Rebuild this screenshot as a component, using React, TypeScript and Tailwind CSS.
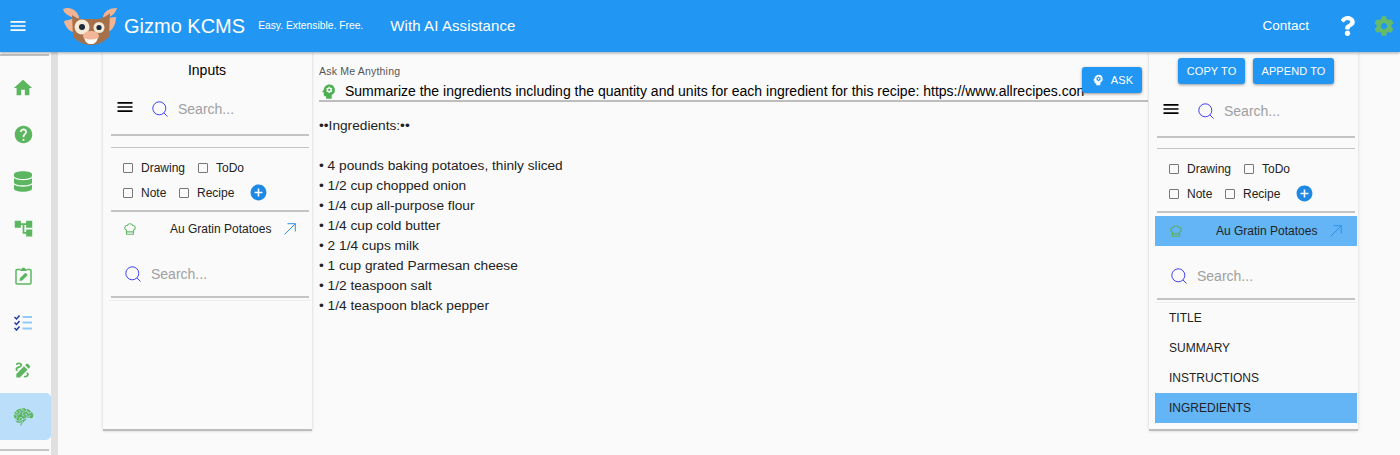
import { FaDatabase, FaQuestion, FaCog } from "react-icons/fa";
import {
  MdAccountTree,
  MdAddCircle,
  MdDraw,
  MdHelp,
  MdHome,
  MdMenu,
  MdPsychology,
} from "react-icons/md";
import { LuChefHat } from "react-icons/lu";
import { GiBrain } from "react-icons/gi";

const ingredients = [
  "4 pounds baking potatoes, thinly sliced",
  "1/2 cup chopped onion",
  "1/4 cup all-purpose flour",
  "1/4 cup cold butter",
  "2 1/4 cups milk",
  "1 cup grated Parmesan cheese",
  "1/2 teaspoon salt",
  "1/4 teaspoon black pepper",
];

const Logo = () => (
  <svg width="60" height="48" viewBox="60 0 60 48" className="shrink-0">
    <path d="M76 16 C70 15 64 12 63 7 C70 4 77 8 79 15 L78 31 C71 31 65 26 64 19 Z" fill="#f2b594" />
    <path d="M106 16 C112 15 116 10 117 6 C110 6 104 9 103 15 L104 31 C111 31 116 24 116 15 Z" fill="#f2b594" />
    <path d="M72 13 C75 15 78 17 82 17 L98 17 C103 16 107 14 110 11 L109 35 C104 40 97 43 91 43 C85 43 78 40 73 35 Z" fill="#a5714a" />
    <circle cx="82" cy="25" r="7.5" fill="#f5ead8" />
    <circle cx="82" cy="25" r="3" fill="#1d2a3a" />
    <circle cx="99" cy="25.500" r="5.500" fill="#f5ead8" />
    <circle cx="99" cy="25.500" r="2.600" fill="#1d2a3a" />
    <ellipse cx="91" cy="34" rx="8" ry="5" fill="#f4b699" />
    <path d="M84.500 36 C87 38 95 38 97.500 36 C97 40 94.500 42 91 42 C87.500 42 85 40 84.500 36 Z" fill="#ffffff" />
  </svg>
);

const Checklist = () => (
  <svg width="18" height="16" viewBox="0 0 18 16" fill="none">
    <path d="M0.500 2 L2.500 4 L5.500 0.500 M0.500 7.500 L2.500 9.500 L5.500 6 M0.500 13 L2.500 15 L5.500 11.500" stroke="#1e3aa8" strokeWidth="1.500" />
    <path d="M8.500 2 H18 M8.500 7.500 H18 M8.500 13.500 H18" stroke="#90caf9" strokeWidth="1.800" />
  </svg>
);

const ClipboardEdit = () => (
  <svg width="17" height="18" viewBox="0 0 17 18" fill="none">
    <path d="M5.500 2.500 H2 C1.400 2.500 1 2.900 1 3.500 V16 C1 16.600 1.400 17 2 17 H15 C15.600 17 16 16.600 16 16 V3.500 C16 2.900 15.600 2.500 15 2.500 H11.500" stroke="currentColor" strokeWidth="1.500" />
    <path d="M5 4 L6.500 1.800 C7 0.300 10 0.300 10.500 1.800 L12 4 Z" fill="currentColor" />
    <path d="M4.500 14 L5 11 L10.500 5.800 L12.800 8 L7.300 13.500 Z" fill="currentColor" />
  </svg>
);

const SearchGlass = () => (
  <svg width="16" height="16" viewBox="0 0 16 16" fill="none" className="shrink-0">
    <circle cx="7.300" cy="7.300" r="6.500" stroke="#3f3ff5" strokeWidth="1" />
    <path d="M12 12 L15.500 15.500" stroke="#3f3ff5" strokeWidth="1" />
  </svg>
);

const ArrowOut = () => (
  <svg width="12" height="12" viewBox="0 0 12 12" fill="none" className="ml-[13px] shrink-0">
    <path d="M0.500 11.500 L11.300 0.700 M3.500 0.700 H11.300 V8.500" stroke="#2e8fe8" strokeWidth="1" />
  </svg>
);

const Search = ({ className }: { className: string }) => (
  <div className={`flex items-center ${className}`}>
    <SearchGlass />
    <span className="ml-[10px] text-[14px] text-[#a0a0a0]">Search...</span>
  </div>
);

const Rule = ({ className = "" }: { className?: string }) => (
  <div className={`ml-[2px] mr-[2px] shrink-0 bg-[#c4c4c4] ${className}`} />
);

const Tick = ({ label, className = "" }: { label: string; className?: string }) => (
  <div className={`flex items-center ${className}`}>
    <span className="w-[10px] h-[10px] border border-[#777] rounded-[1px] mr-[8px]" />
    <span className="text-[12px] text-[#222]">{label}</span>
  </div>
);

const Types = () => (
  <div className="pl-[14px] pt-[7px] h-[62px] shrink-0">
    <div className="flex h-[25px] items-center">
      <Tick label="Drawing" className="w-[75px]" />
      <Tick label="ToDo" />
    </div>
    <div className="flex h-[25px] items-center">
      <Tick label="Note" className="w-[56px]" />
      <Tick label="Recipe" className="w-[70px]" />
      <MdAddCircle className="w-[19px] h-[19px] text-[#1e88e5]" />
    </div>
  </div>
);

const Item = ({ active }: { active?: boolean }) => (
  <div className={`flex items-center h-[30px] pl-[14px] ${active ? "bg-[#64b5f6]" : ""}`}>
    <LuChefHat className={`w-[14px] h-[14px] ${active ? "text-[#5cae60]" : "text-[#66bb6a]"}`} />
    <span className="ml-[33px] text-[12px] text-[#222]">Au Gratin Potatoes</span>
    <ArrowOut />
  </div>
);

const Panel = ({ children }: { children: React.ReactNode }) => (
  <div className="w-[209px] h-[379px] shrink-0 flex flex-col pl-[6px] pr-[1px] bg-[#fafafa] border-b-2 border-[#bdbdbd] shadow-[0_0_3px_rgba(0,0,0,0.18)]">
    {children}
  </div>
);

const Button = ({ children, className = "" }: { children: React.ReactNode; className?: string }) => (
  <div className={`flex items-center justify-center shrink-0 h-[26px] rounded-[3px] bg-[#2196f3] text-white text-[11px] tracking-[0.1px] shadow-[0_1px_3px_rgba(0,0,0,0.4)] ${className}`}>
    {children}
  </div>
);

const navCell = "h-[47px] pr-[5px] flex items-center justify-center";

export default function App() {
  return (
    <div className="w-[1400px] h-[455px] overflow-hidden flex flex-col bg-[#fafafa] font-['Liberation_Sans',sans-serif] text-black">
      <header className="relative z-10 h-[52px] shrink-0 flex items-center bg-[#2196f3] text-white shadow-[0_1px_3px_rgba(0,0,0,0.35)]">
        <MdMenu className="ml-[8px] w-[20px] h-[20px]" />
        <div className="ml-[32px]">
          <Logo />
        </div>
        <span className="ml-[4px] text-[20px]">Gizmo KCMS</span>
        <span className="ml-[13px] text-[10.300px]">Easy. Extensible. Free.</span>
        <span className="ml-[27px] text-[15px] tracking-[0.1px]">With AI Assistance</span>
        <span className="ml-auto text-[13.500px]">Contact</span>
        <FaQuestion className="ml-[31px] w-[15px] h-[22px]" />
        <FaCog className="ml-[19px] mr-[6px] w-[20px] h-[20px] text-[#66bb6a]" />
      </header>

      <div className="flex flex-1 min-h-0">
        <nav className="w-[58px] shrink-0 border-r-[7px] border-[#e0e0e0] flex flex-col text-[#5cb660]">
          <div className="h-[2px] mt-[2px] mb-[8px] bg-[#c4c4c4] mr-[2px]" />
          <div className="flex flex-col">
            <div className={navCell}><MdHome className="w-[22px] h-[22px]" /></div>
            <div className={navCell}><MdHelp className="w-[21px] h-[21px]" /></div>
            <div className={navCell}><FaDatabase className="w-[18px] h-[21px]" /></div>
            <div className={navCell}><MdAccountTree className="w-[21px] h-[21px]" /></div>
            <div className={navCell}><ClipboardEdit /></div>
            <div className={navCell}><Checklist /></div>
            <div className={navCell}><MdDraw className="w-[20px] h-[20px]" /></div>
            <div className={`${navCell} bg-[#bbdefb] rounded-r-[5px]`}><GiBrain className="w-[21px] h-[21px]" /></div>
          </div>
          <div className="h-[2px] mt-[9px] bg-[#c4c4c4] mr-[2px]" />
        </nav>

        <main className="flex-1 min-w-0 flex items-start pl-[45px]">
          <Panel>
            <div className="h-[36px] flex items-center justify-center text-[14px] -ml-[6px]">Inputs</div>
            <div className="flex items-center h-[42px] mb-[4px] pl-[6px]">
              <MdMenu className="w-[20px] h-[20px] -mt-[4px]" />
              <Search className="ml-[17px]" />
            </div>
            <Rule className="h-[2px]" />
            <div className="h-[11px] shrink-0" />
            <Rule className="h-[1px]" />
            <Types />
            <Rule className="h-[2px]" />
            <div className="mt-[2px]"><Item /></div>
            <Search className="h-[40px] pl-[16px] mt-[10px] shrink-0" />
            <div className="h-[2px] shrink-0" />
            <Rule className="h-[2px]" />
            <div className="mt-[2px] h-[1px] bg-[#eeeeee]" />
          </Panel>

          <section className="w-[837px] shrink-0 pl-[7px] pr-[1px]">
            <div className="flex">
              <div className="flex-1 min-w-0 h-[50px] pt-[13px] border-b-2 border-[#bdbdbd] -mr-[66px]">
                <div className="text-[10.500px] tracking-[0.2px] text-[#555] leading-[13px]">Ask Me Anything</div>
                <div className="flex items-center h-[24px] mt-[1px]">
                  <MdPsychology className="w-[19px] h-[19px] text-[#4caf50] shrink-0" />
                  <span className="ml-[7px] text-[14px] whitespace-nowrap">
                    Summarize the ingredients including the quantity and units for each ingredient for this recipe: https://www.allrecipes.con
                  </span>
                </div>
              </div>
              <Button className="relative mt-[15px] mr-[6px] w-[60px] gap-[6px]">
                <MdPsychology className="w-[14px] h-[14px]" />
                ASK
              </Button>
            </div>
            <div className="mt-[14px] text-[13.700px] leading-[20px] text-[#222]">
              <div>••Ingredients:••</div>
              <div className="h-[20px]" />
              {ingredients.map((x) => (
                <div key={x}>• {x}</div>
              ))}
            </div>
          </section>

          <Panel>
            <div className="flex gap-[8px] pt-[6px] h-[37px] pl-[23px] shrink-0">
              <Button className="w-[67px]">COPY TO</Button>
              <Button className="w-[81px]">APPEND TO</Button>
            </div>
            <div className="flex items-center h-[44px] mb-[3px] pl-[6px]">
              <MdMenu className="w-[20px] h-[20px] -mt-[4px]" />
              <Search className="ml-[17px]" />
            </div>
            <Rule className="h-[2px]" />
            <div className="h-[10px] shrink-0" />
            <Rule className="h-[1px]" />
            <Types />
            <Rule className="h-[2px]" />
            <div className="mt-[3px]"><Item active /></div>
            <Search className="h-[40px] pl-[16px] mt-[10px] shrink-0" />
            <div className="h-[2px] shrink-0" />
            <Rule className="h-[2px]" />
            <div className="mt-[2px] h-[1px] bg-[#eeeeee]" />
            <div className="text-[12px] text-[#222]">
              <div className="h-[30px] pl-[14px] flex items-center">TITLE</div>
              <div className="h-[30px] pl-[14px] flex items-center">SUMMARY</div>
              <div className="h-[30px] pl-[14px] flex items-center">INSTRUCTIONS</div>
              <div className="h-[30px] pl-[14px] flex items-center bg-[#64b5f6]">INGREDIENTS</div>
            </div>
          </Panel>
        </main>
      </div>
    </div>
  );
}
